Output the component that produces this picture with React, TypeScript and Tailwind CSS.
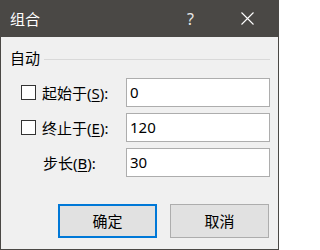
import React from "react";

const font = "font-['Noto_Sans','Noto_Sans_CJK_SC',sans-serif]";

function Row({ check, label, u, tail, value }: { check: boolean; label: string; u: string; tail: string; value: string }) {
  return (
    <div className="flex h-[29px] items-center">
      <div className="flex w-[125px] items-center">
        {check ? (
          <>
            <div className="ml-[20px] h-[15px] w-[15px] border border-[#333333] bg-white" />
            <span className="ml-[6px] text-[15px] leading-[20px] text-black">
              {label}(<span className="underline underline-offset-2">{u}</span>){tail}
            </span>
          </>
        ) : (
          <span className="ml-[42px] text-[15px] leading-[20px] text-black">
            {label}(<span className="underline underline-offset-2">{u}</span>){tail}
          </span>
        )}
      </div>
      <div className="flex h-[29px] w-[144px] items-center border border-[#adadad] bg-white pl-[3px] text-[15px] text-black">
        {value}
      </div>
    </div>
  );
}

export default function App() {
  return (
    <div className={`${font} flex h-[250px] w-[279px] flex-col bg-[#f0f0f0] border-x border-b border-[#4a4845]`}>
      <div className="-mx-px flex h-[37px] items-center bg-[#4a4845] text-white">
        <span className="ml-[10px] text-[15px] leading-[20px]">组合</span>
        <span className="ml-[147px] text-[16px] leading-[20px] text-[#e8e8e8]">?</span>
        <svg className="ml-[47px]" width="13" height="13" viewBox="0 0 13 13">
          <path d="M0.5 0.5 L12.5 12.5 M12.5 0.5 L0.5 12.5" stroke="#ffffff" strokeWidth="1.1" fill="none" />
        </svg>
      </div>
      <div className="mt-[11px] flex h-[20px] items-center">
        <span className="ml-[9px] text-[15px] leading-[20px] text-black">自动</span>
        <div className="ml-[4px] mr-[8px] mt-[2px] h-px flex-1 bg-[#d9d9d9]" />
      </div>
      <div className="mt-[10px] flex flex-col gap-[6px]">
        <Row check label="起始于" u="S" tail=":" value="0" />
        <Row check label="终止于" u="E" tail=":" value="120" />
        <Row check={false} label="步长" u="B" tail=":" value="30" />
      </div>
      <div className="mt-[27px] flex gap-[13px] pl-[57px]">
        <button className="flex h-[34px] w-[99px] items-center justify-center border-2 border-[#0078d7] bg-[#e1e1e1] text-[15px] text-black">
          确定
        </button>
        <button className="flex h-[34px] w-[99px] items-center justify-center border border-[#adadad] bg-[#e1e1e1] text-[15px] text-black">
          取消
        </button>
      </div>
    </div>
  );
}
